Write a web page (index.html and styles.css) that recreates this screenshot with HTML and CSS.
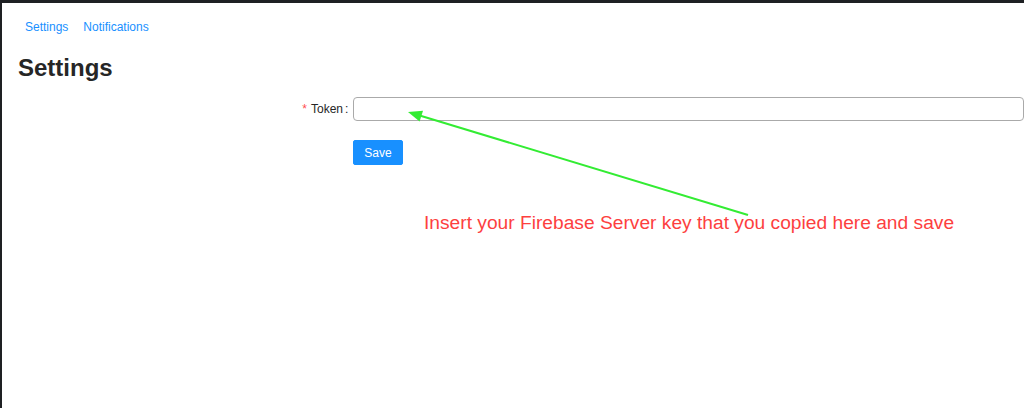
FILE: index.html
```html
<!DOCTYPE html>
<html lang="en">

<head>
    <meta charset="UTF-8">
    <meta name="viewport" content="width=device-width, initial-scale=1.0">
    <title>Settings</title>
    <link rel="stylesheet" href="styles.css">
</head>

<body>
    <div class="page">
        <!-- Top tabs -->
        <nav class="tabs">
            <a href="#">Settings</a>
            <a href="#">Notifications</a>
        </nav>

        <h1>Settings</h1>

        <!-- Token form -->
        <form class="settings-form">
            <div class="form-row">
                <label class="form-label" for="token"><span class="required">*</span>Token</label>
                <div class="form-control">
                    <input type="text" id="token" name="token">
                </div>
            </div>
            <div class="form-row">
                <div></div>
                <div class="form-control">
                    <button type="submit">Save</button>
                </div>
            </div>
        </form>
    </div>

    <!-- Annotation drawn over the screenshot -->
    <svg class="annotation-arrow" width="1024" height="408" viewBox="0 0 1024 408">
        <line x1="748" y1="215" x2="418" y2="115" stroke="#33ec33" stroke-width="2" />
        <polygon points="408,112 423,110.8 419.6,121.6" fill="#33ec33" />
    </svg>
    <p class="annotation-text">Insert your Firebase Server key that you copied here and save</p>
</body>

</html>
```

FILE: styles.css
```css
body {
    margin: 0;
    font-family: "Liberation Sans", Arial, sans-serif;
    background-color: #fff;
    color: #262626;
}

.page {
    box-sizing: border-box;
    height: 408px;
    border-top: 3px solid #1e2023;
    border-left: 2px solid #1e2023;
    padding: 0 0 0 16px;
}

.tabs {
    display: flex;
    gap: 15px;
    padding: 16px 0 0 7px;
    font-size: 12px;
    line-height: 16px;
}

.tabs a {
    color: #1890ff;
    text-decoration: none;
}

h1 {
    margin: 17px 0 13px 0;
    font-size: 24px;
    line-height: 32px;
    font-weight: bold;
    color: #262626;
}

.form-row {
    display: grid;
    grid-template-columns: 1fr 2fr;
    margin-bottom: 19px;
}

.form-label {
    text-align: right;
    font-size: 12px;
    line-height: 24px;
    color: #262626;
}

.form-label::after {
    content: ":";
    margin: 0 5px 0 2px;
}

.required {
    color: #ff4d4f;
    margin-right: 4px;
}

.form-control input {
    box-sizing: border-box;
    display: block;
    width: 100%;
    height: 24px;
    border: 1px solid #aaa;
    border-radius: 4px;
    padding: 0 8px;
    font-size: 12px;
    font-family: inherit;
}

.form-control button {
    height: 25px;
    padding: 0 10px;
    background-color: #1890ff;
    border: 1px solid #1890ff;
    border-radius: 2px;
    color: #fff;
    font-size: 12px;
    font-family: inherit;
    cursor: pointer;
}

.annotation-arrow {
    position: absolute;
    top: 0;
    left: 0;
    pointer-events: none;
}

.annotation-text {
    position: absolute;
    top: 212px;
    left: 424px;
    margin: 0;
    font-size: 19.2px;
    line-height: 22px;
    color: #fd3f3f;
}
```
